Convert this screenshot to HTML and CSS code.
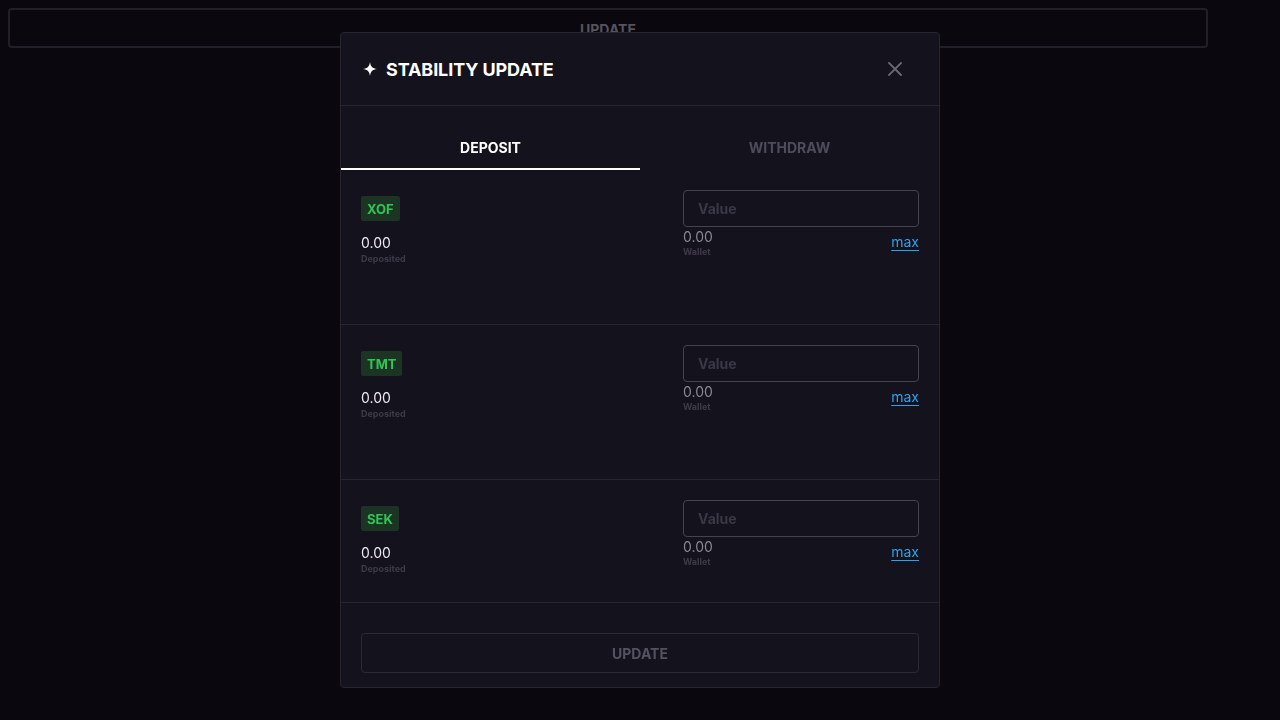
FILE: index.html
```html
<!DOCTYPE html>
<html>
<head>
<meta charset="utf-8">
<link rel="stylesheet" href="styles.css">
</head>
<body>
<div class="page">
  <button class="page-btn">UPDATE</button>
</div>
<div class="overlay">
  <div class="modal">
    <div class="modal-header">
      <div class="title">
        <svg class="star" width="14" height="14" viewBox="0 0 14 14"><path d="M7 0 C7.6 4.6 9.4 6.4 14 7 C9.4 7.6 7.6 9.4 7 14 C6.4 9.4 4.6 7.6 0 7 C4.6 6.4 6.4 4.6 7 0 Z" fill="#ffffff"/></svg>
        <span>STABILITY UPDATE</span>
      </div>
      <svg class="close" width="14" height="14" viewBox="0 0 14 14"><path d="M1 1 L13 13 M13 1 L1 13" stroke="#6b6877" stroke-width="1.8" stroke-linecap="square"/></svg>
    </div>
    <div class="tabs">
      <div class="tab active">DEPOSIT</div>
      <div class="tab">WITHDRAW</div>
    </div>
    <div class="rows">
      <div class="asset-row">
        <div class="asset-left">
          <span class="badge">XOF</span>
          <div class="amount">0.00</div>
          <div class="sub">Deposited</div>
        </div>
        <div class="asset-right">
          <div class="input">Value</div>
          <div class="wallet-line">
            <div>
              <div class="wallet-amount">0.00</div>
              <div class="sub sub-wallet">Wallet</div>
            </div>
            <a class="max">max</a>
          </div>
        </div>
      </div>
      <div class="asset-row">
        <div class="asset-left">
          <span class="badge">TMT</span>
          <div class="amount">0.00</div>
          <div class="sub">Deposited</div>
        </div>
        <div class="asset-right">
          <div class="input">Value</div>
          <div class="wallet-line">
            <div>
              <div class="wallet-amount">0.00</div>
              <div class="sub sub-wallet">Wallet</div>
            </div>
            <a class="max">max</a>
          </div>
        </div>
      </div>
      <div class="asset-row">
        <div class="asset-left">
          <span class="badge">SEK</span>
          <div class="amount">0.00</div>
          <div class="sub">Deposited</div>
        </div>
        <div class="asset-right">
          <div class="input">Value</div>
          <div class="wallet-line">
            <div>
              <div class="wallet-amount">0.00</div>
              <div class="sub sub-wallet">Wallet</div>
            </div>
            <a class="max">max</a>
          </div>
        </div>
      </div>
    </div>
    <div class="modal-footer">
      <button class="update-btn">UPDATE</button>
    </div>
  </div>
</div>
</body>
</html>
```
FILE: styles.css
```css
* { box-sizing: border-box; }
html, body { margin: 0; padding: 0; }
body {
  width: 1280px;
  height: 720px;
  background: #0a080e;
  font-family: Inter, "Noto Sans", sans-serif;
  overflow: hidden;
}
.page {
  padding: 8px;
}
.page-btn {
  display: block;
  width: 1200px;
  height: 40px;
  background: transparent;
  border: 2px solid #211f27;
  border-radius: 4px;
  color: #56535f;
  font-family: Inter, sans-serif;
  font-weight: 700;
  font-size: 14px;
  padding: 2px 0 0;
}
.overlay {
  position: fixed;
  inset: 0;
  display: flex;
  justify-content: center;
  align-items: flex-start;
  padding-top: 32px;
}
.modal {
  width: 600px;
  background: #14121c;
  border: 1px solid #27252f;
  border-radius: 4px;
}
.modal-header {
  height: 73px;
  display: flex;
  align-items: center;
  justify-content: space-between;
  padding: 0 37px 0 22px;
  border-bottom: 1px solid #27252f;
}
.title {
  display: flex;
  align-items: center;
  gap: 9px;
  color: #ffffff;
  font-family: Inter, sans-serif;
  font-weight: 700;
  font-size: 18px;
  letter-spacing: -0.1px;
}
.title span { padding-top: 1px; }
.tabs {
  display: flex;
  height: 64px;
}
.tab {
  flex: 1;
  display: flex;
  align-items: center;
  justify-content: center;
  padding-top: 20px;
  font-size: 14px;
  font-weight: 700;
  color: #4f4c59;
  border-bottom: 2px solid transparent;
}
.tab.active {
  color: #ffffff;
  border-bottom-color: #ffffff;
}
.asset-row {
  display: flex;
  justify-content: space-between;
  padding: 20px 20px 28px;
  border-bottom: 1px solid #27252f;
}
.asset-row:not(:last-child) {
  padding-bottom: 60px;
}
.asset-left {
  padding-top: 6px;
}
.badge {
  display: inline-flex;
  align-items: center;
  height: 25px;
  padding: 0 6px;
  border-radius: 2px;
  background: #1b3424;
  color: #2fc655;
  font-size: 13px;
  font-weight: 700;
}
.amount {
  margin-top: 12px;
  line-height: 20px;
  font-size: 14px;
  color: #ece9f2;
}
.sub {
  font-size: 9px;
  font-weight: 700;
  line-height: 11px;
  color: #3e3b48;
}
.asset-right {
  width: 236px;
}
.input {
  height: 37px;
  border: 1px solid #46434f;
  border-radius: 4px;
  padding-left: 14px;
  display: flex;
  align-items: center;
  color: #3b3845;
  font-size: 14px;
  font-weight: 700;
}
.wallet-line {
  display: flex;
  justify-content: space-between;
  align-items: center;
}
.wallet-amount {
  line-height: 20px;
  font-size: 14px;
  color: #8a8794;
}
.sub-wallet {
  line-height: 10px;
}
.max {
  color: #29a3f0;
  font-size: 14px;
  line-height: 18px;
  text-decoration: underline;
  text-underline-offset: 3px;
}
.modal-footer {
  padding: 30px 20px 14px;
}
.update-btn {
  display: block;
  width: 100%;
  height: 40px;
  background: transparent;
  border: 1px solid #2b2934;
  border-radius: 4px;
  color: #55525f;
  font-family: Inter, sans-serif;
  font-weight: 700;
  font-size: 14px;
}
```
